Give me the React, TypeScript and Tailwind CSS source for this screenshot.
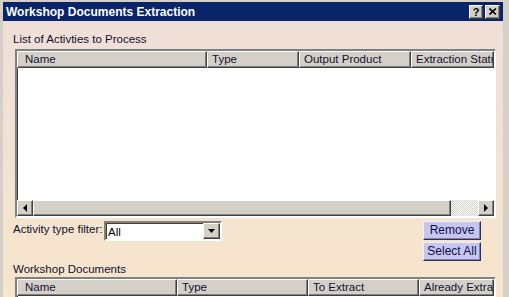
const FONT = 'font-["Liberation_Sans","Arial",sans-serif]';

const raised =
  'border border-t-white border-l-white border-r-[#404040] border-b-[#404040] shadow-[inset_-1px_-1px_0_#808080]';
const sunken =
  'border-2 border-t-[#808080] border-l-[#808080] border-r-white border-b-white shadow-[inset_1px_1px_0_#404040]';

type Col = { label: string; width: string; pad?: string };

const activityCols: Col[] = [
  { label: 'Name', width: 'w-[190px]', pad: 'pl-[7px]' },
  { label: 'Type', width: 'w-[92px]' },
  { label: 'Output Product', width: 'w-[112px]' },
  { label: 'Extraction Status', width: 'flex-1' },
];

const documentCols: Col[] = [
  { label: 'Name', width: 'w-[160px]', pad: 'pl-[7px]' },
  { label: 'Type', width: 'w-[131px]' },
  { label: 'To Extract', width: 'w-[111px]' },
  { label: 'Already Extracted', width: 'flex-1' },
];

function HeaderRow({ cols }: { cols: Col[] }) {
  return (
    <div className="flex h-[17px] shrink-0 overflow-hidden bg-[#d4d0c8]">
      {cols.map((c) => (
        <div
          key={c.label}
          className={`${c.width} ${raised} ${c.pad ?? 'pl-[4px]'} min-w-0 overflow-hidden whitespace-nowrap text-[11.5px] leading-[15px] text-[#101030]`}
        >
          {c.label}
        </div>
      ))}
    </div>
  );
}

function Arrow({ dir }: { dir: 'left' | 'right' | 'down' }) {
  const points = dir === 'left' ? '4,0 0,4 4,8' : dir === 'right' ? '0,0 4,4 0,8' : '0,0 7,0 3.5,4';
  const w = dir === 'down' ? 7 : 4;
  const h = dir === 'down' ? 4 : 8;
  return (
    <svg width={w} height={h} viewBox={`0 0 ${w} ${h}`}>
      <polygon points={points} fill="#000" />
    </svg>
  );
}

function ScrollBar() {
  return (
    <div className="flex h-[16px] shrink-0 bg-[#d4d0c8]">
      <div className={`flex w-[16px] items-center justify-center ${raised}`}>
        <Arrow dir="left" />
      </div>
      <div className={`w-[418px] ${raised}`} />
      <div className="flex-1 bg-[repeating-conic-gradient(#d4d0c8_0%_25%,#ffffff_0%_50%)] bg-size-[2px_2px]" />
      <div className={`flex w-[16px] items-center justify-center ${raised}`}>
        <Arrow dir="right" />
      </div>
    </div>
  );
}

function LavenderButton({ label }: { label: string }) {
  return (
    <button
      type="button"
      className="h-[19px] w-[58px] border border-t-[#eeeeff] border-l-[#eeeeff] border-r-[#303050] border-b-[#303050] bg-[#c6c6ee] text-[12px] leading-[15px] text-[#101050] shadow-[inset_-1px_-1px_0_#8080a8]"
    >
      {label}
    </button>
  );
}

export default function App() {
  return (
    <div className={`flex h-[297px] w-[509px] flex-col overflow-hidden bg-[#d4d0c8] pl-[3px] pr-[6px] pt-[2px] ${FONT}`}>
      <div className="flex h-[19px] shrink-0 items-center justify-between bg-[#0a246a] pl-[3px] pr-[3px]">
        <span className="text-[12px] font-bold leading-[14px] text-white">Workshop Documents Extraction</span>
        <div className="flex gap-[2px]">
          <div className={`flex h-[14px] w-[14px] items-center justify-center bg-[#d4d0c8] ${raised} text-[11px] font-bold leading-[12px] text-black`}>
            ?
          </div>
          <div className={`flex h-[14px] w-[15px] items-center justify-center bg-[#d4d0c8] ${raised}`}>
            <svg width="8" height="7" viewBox="0 0 8 7">
              <path d="M0.5 0.5 L7 6.5 M7 0.5 L0.5 6.5" stroke="#000" strokeWidth="1.6" />
            </svg>
          </div>
        </div>
      </div>

      <div className="flex flex-1 flex-col bg-linear-to-b from-[#efdfd8] to-[#f8e6ca] pl-[10px] pt-[12px] text-[11.5px] leading-[13px] text-[#101030]">
        <div className="h-[13px]">List of Activties to Process</div>

        <div className={`ml-[2px] mt-[3px] flex h-[169px] w-[481px] flex-col bg-white ${sunken}`}>
          <HeaderRow cols={activityCols} />
          <div className="flex-1" />
          <ScrollBar />
        </div>

        <div className="ml-[2px] mt-[3px] flex h-[43px] w-[481px] items-start">
          <span className="-ml-[2px] mt-[2px] w-[91px] whitespace-nowrap leading-[13px]">Activity type filter:</span>
          <div className={`flex h-[20px] w-[118px] items-center bg-white ${sunken}`}>
            <span className="flex-1 pl-[2px] pt-[2px] leading-[13px] text-black">All</span>
            <div className={`flex h-[16px] w-[17px] items-center justify-center bg-[#d4d0c8] ${raised}`}>
              <Arrow dir="down" />
            </div>
          </div>
          <div className="ml-auto mr-[15px] flex flex-col gap-[2px]">
            <LavenderButton label="Remove" />
            <LavenderButton label="Select All" />
          </div>
        </div>

        <div className="-mt-[1px] h-[13px]">Workshop Documents</div>

        <div className={`ml-[2px] mt-[1px] flex h-[60px] w-[481px] flex-col bg-white ${sunken}`}>
          <HeaderRow cols={documentCols} />
          <div className="flex-1" />
        </div>
      </div>
    </div>
  );
}
